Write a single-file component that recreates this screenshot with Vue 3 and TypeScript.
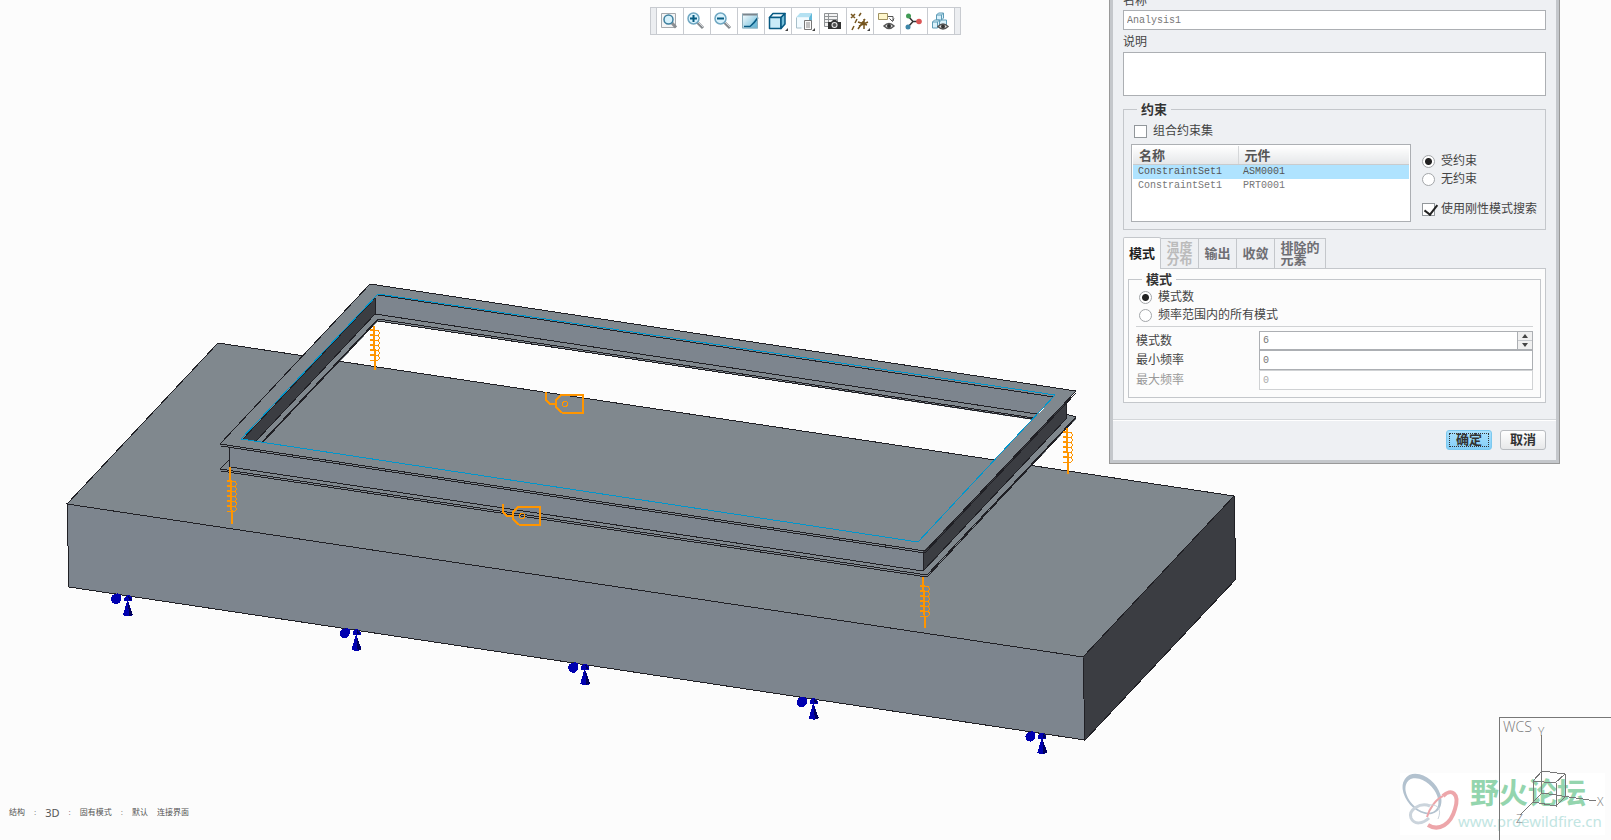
<script setup lang="ts">
import { ref } from 'vue'

interface Point { x: number; y: number }
interface Spring extends Point { length: number; coil: number; lean: number }

const name = ref('Analysis1')
const description = ref('')
const combine = ref(false)
const support = ref('constrained')
const rigid = ref(true)
const modeKind = ref('count')
const modeCount = ref('6')
const minFreq = ref('0')
const maxFreq = ref('0')
const activeTab = ref(0)
const selectedRow = ref(0)

const sets = [
  { name: 'ConstraintSet1', part: 'ASM0001' },
  { name: 'ConstraintSet1', part: 'PRT0001' },
]
const tabs = [
  { label: '模式', disabled: false },
  { label: '温度\n分布', disabled: true },
  { label: '输出', disabled: false },
  { label: '收敛', disabled: false },
  { label: '排除的\n元素', disabled: false },
]
const tools = ['重新调整', '放大', '缩小', '重画', '显示样式', '已保存方向', '视图管理器', '基准显示', '注释显示', '旋转中心', '仿真显示']

const supports: Point[] = [0, 1, 2, 3, 4].map((i) => ({ x: 111 + i * 228.6, y: 593 + i * 34.4 }))
const springs: Spring[] = [
  { x: 374, y: 326, length: 44, coil: 3, lean: 1 },
  { x: 230, y: 467, length: 57, coil: 13, lean: 2 },
  { x: 1067, y: 428, length: 46, coil: 3, lean: 1 },
  { x: 923, y: 577, length: 51, coil: 8, lean: 2 },
]
const masses: Point[] = [{ x: 546, y: 392 }, { x: 503, y: 504 }]
const loops = [0, 1, 2, 3, 4, 5]

function step(delta: number) {
  modeCount.value = String(Math.max(0, Number(modeCount.value) + delta))
}
</script>

<template>
  <main class="workspace">
    <svg class="scene" viewBox="0 0 1611 840" preserveAspectRatio="xMinYMin meet" aria-hidden="true">
      <g class="edge">
        <path class="top" d="M218 343L1234 496L1083 657L67 504Z" />
        <path class="front" d="M67 504L1083 657L1085 740L69 587Z" />
        <path class="side" d="M1083 657L1234 496L1236 579L1085 740Z" />
      </g>
      <g>
        <path class="top" fill-rule="evenodd" d="M370 284L1076 391L1066 403V414L1076 417V419L927 578L220 471L230 459V447L220 445ZM378 321L1033 420L1055 396L918 542L264 443Z" />
        <path class="front" d="M375 295L1054 397L1037 414L375 314Z" />
        <path class="front" d="M230 447L923 552V571L230 467Z" />
        <path class="side" d="M242 440L375 297V314L256 441Z" />
        <path class="side" d="M923 552L1066 402V419L924 571Z" />
      </g>
      <g class="line">
        <path d="M220 444L370 284L1076 391L925 551ZM221 446L925 553L1076 393" />
        <path d="M378 295L1054 397M375 298V314L1037 414M378 319L1034 418M378 321L1032 419" />
        <path d="M242 440L375 298M256 441L375 314M262 442L378 319M263 442L378 320" />
        <path d="M229.500 447V467M230 459L220 469L927 575L1076 417L1066 414M221 471L927 577L1076 418M230 467L923 571L1066 419V402M923 552V571" />
      </g>
      <path class="contour" d="M241 439L378 294L1055 395L918 542Z" />
      <g v-for="(s, i) in springs" :key="'s' + i" class="orange" :transform="`translate(${s.x} ${s.y})`">
        <path class="stem" :d="`M0 0L${s.lean} ${s.length}`" />
        <path v-for="n in loops" :key="n" :d="`M${s.lean} ${s.coil + n * 5}h-5v1h5h2q3 1 2 4q-1 2-4 1h-5`" />
      </g>
      <g v-for="(m, i) in masses" :key="'m' + i" class="orange mass" :transform="`translate(${m.x} ${m.y})`">
        <path d="M0 0V8L4 12H10M17 21L15 20L10 15V8L15 3H37V21H17" />
        <circle cx="19" cy="12" r="2.500" />
      </g>
      <g v-for="(p, i) in supports" :key="'p' + i" class="support" :transform="`translate(${p.x} ${p.y})`">
        <circle cx="5" cy="6" r="5" /><path d="M6 0L10 2V6L6 7ZM13 8V5L16 2H18L21 5V8ZM16 8h1L22 22Q17 25 12 22Z" />
        <path class="shade" d="M17 9L22 22L18 23ZM17 3h1l3 4h-3Z" />
      </g>
    </svg>

    <div class="toolbar" role="toolbar" aria-label="视图">
      <button v-for="(tool, i) in tools" :key="tool" type="button" class="tool" :aria-label="tool">
        <svg viewBox="0 0 24 24" width="24" height="24">
          <defs>
            <linearGradient id="sky" x2="1" y2="1"><stop stop-color="#fff" /><stop offset="1" stop-color="#62b8d8" /></linearGradient>
          </defs>
          <g v-if="i === 0" fill="none">
            <path d="M4.500 4.500h14v14h-14Z" fill="#f5f5f5" stroke="#a5a9ad" />
            <path d="M15 14l4 4.500" stroke="#8b8f93" stroke-width="3" /><circle cx="11.500" cy="10.500" r="4.500" fill="#d6f1fb" stroke="#3d7f9e" stroke-width="1.500" />
          </g>
          <g v-else-if="i === 1 || i === 2" fill="none">
            <path d="M13 13l6 6" stroke="#858a8e" stroke-width="3" /><path d="M14 13l5 5" stroke="#d5d7d9" />
            <circle cx="9.500" cy="9.500" r="5.500" fill="#d9f2fc" stroke="#6fa7c2" stroke-width="1.500" />
            <path d="M6 9.500h7" stroke="#075d83" stroke-width="2" /><path v-if="i === 1" d="M9.500 6v7" stroke="#075d83" stroke-width="2" />
          </g>
          <g v-else-if="i === 3">
            <path d="M4 4.500h16v15H4Z" fill="url(#sky)" /><path d="M4 4.500h16v2H4Z" fill="#7b858c" /><path d="M12 19Q14 12 20 8v11Z" fill="#5badcf" opacity=".5" />
            <path d="M6 17.500h6q4-3 8-9" fill="none" stroke="#075a83" stroke-width="1.500" /><path d="M4.500 5v14h15V5" fill="none" stroke="#8cadbb" />
          </g>
          <g v-else-if="i === 4" fill="#c9ebf8" stroke="#075a83" stroke-width="1.500" stroke-linejoin="round">
            <path d="M4.500 8.500L8 4.500h12l-4 4Z" fill="#f0fbff" /><path d="M4.500 8.500H16v11H4.500Z" /><path d="M16 8.500l4-4V15l-4 4.500Z" fill="#75bed9" />
          </g>
          <g v-else-if="i === 5">
            <path d="M4 8.500L8 4h12l-3 4.500Z" fill="#b4e1f2" /><path d="M4 8.500h13v11H4Z" fill="#f2fbff" /><path d="M17 8.500L20 4v12l-3 3Z" fill="#62b9da" /><path d="M4.500 8.500V19h5" fill="none" stroke="#a7bfca" />
            <path d="M12.500 11.500h7v9h-7Z" fill="#fafafa" stroke="#777" /><path d="M14 14h4M14 16h4M14 18h4" stroke="#888" />
          </g>
          <g v-else-if="i === 6">
            <path d="M4.500 4.500h13v13h-13ZM4 7.500h14M4 10.500h14M4 13.500h14M8.500 4v14" fill="#f3f3f3" stroke="#909395" />
            <path d="M8 13h3l2-2h3l2 2h3v7H8Z" fill="#333" /><circle cx="14.500" cy="16" r="3" fill="#eee" /><circle cx="14.500" cy="16" r="2" fill="#555" />
          </g>
          <g v-else-if="i === 7" fill="none" stroke="#75551f" stroke-width="1.500">
            <path d="M4 5l4 4m0-4l-4 4M14 4l-2 3M10 10l-2 4M7 17l-2 4M18 10l-7 10M11 13l9 3M17 10v10M12 17l9-4" />
          </g>
          <g v-else-if="i === 8">
            <path d="M4.500 4.500h9v6h-9Z" fill="#fff7cc" stroke="#a09261" /><path d="M14 7.500h5V12M15.500 9.500l3 3 1.500-3" fill="none" stroke="#555" />
            <path d="M10 17q5-5 10 0q-5 5-10 0Z" fill="#ddd" stroke="#555" stroke-width="1.500" /><circle cx="15" cy="17" r="2" fill="#333" />
          </g>
          <g v-else-if="i === 9">
            <path d="M7 7l5 5.500h6M12 12.500L7 18" fill="none" stroke="#333" stroke-width="1.500" />
            <circle cx="7.500" cy="7" r="2.500" fill="#419b55" /><circle cx="18" cy="12.500" r="2.800" fill="#dc5555" /><circle cx="7" cy="18" r="2.500" fill="#3d86a8" />
          </g>
          <g v-else>
            <g fill="#d9f1fb" stroke="#5c9bb6"><path d="M8.500 6l2-2h5v5l-2 2h-5ZM8.500 6h5v5M13.500 6l2-2" /><path d="M4.500 13l2-2h5v6l-2 2h-5ZM4.500 13h5v6M9.500 13l2-2M11.500 13l2-2h5v6h-7Z" /></g>
            <path d="M10 17.500q5-5 10 0q-5 5-10 0Z" fill="#ddd" stroke="#555" stroke-width="1.500" /><circle cx="15" cy="17.500" r="2" fill="#333" />
          </g>
          <path v-if="i === 4 || i === 5 || i === 7" d="M23 19v3h-3Z" fill="#444" />
        </svg>
      </button>
    </div>

    <form class="dialog" @submit.prevent>
      <div class="content">
        <label for="name" class="caption">名称</label>
        <input id="name" v-model="name" class="field" type="text">
        <label for="description" class="caption second">说明</label>
        <textarea id="description" v-model="description" class="field area"></textarea>

        <fieldset class="group">
          <legend>约束</legend>
          <label class="choice"><input v-model="combine" type="checkbox"><span>组合约束集</span></label>
          <div class="columns">
            <div class="list">
              <table>
                <thead><tr><th>名称</th><th>元件</th></tr></thead>
                <tbody>
                  <tr v-for="(row, i) in sets" :key="i" :class="{ selected: selectedRow === i }" @click="selectedRow = i">
                    <td>{{ row.name }}</td><td>{{ row.part }}</td>
                  </tr>
                </tbody>
              </table>
            </div>
            <div class="options">
              <label class="choice"><input v-model="support" type="radio" name="support" value="constrained"><span>受约束</span></label>
              <label class="choice"><input v-model="support" type="radio" name="support" value="free"><span>无约束</span></label>
              <label class="choice rigid"><input v-model="rigid" type="checkbox"><span>使用刚性模式搜索</span></label>
            </div>
          </div>
        </fieldset>

        <div class="tabs" role="tablist">
          <button v-for="(tab, i) in tabs" :key="tab.label" type="button" role="tab" class="tab" :class="{ active: activeTab === i }" :aria-selected="activeTab === i" :disabled="tab.disabled" @click="activeTab = i"><span>{{ tab.label }}</span></button>
        </div>
        <div class="panel" role="tabpanel">
          <fieldset class="modes">
            <legend>模式</legend>
            <label class="choice"><input v-model="modeKind" type="radio" name="mode" value="count"><span>模式数</span></label>
            <label class="choice"><input v-model="modeKind" type="radio" name="mode" value="range"><span>频率范围内的所有模式</span></label>
            <div class="values">
              <label for="count">模式数</label>
              <div class="spinner">
                <input id="count" v-model="modeCount" type="text" inputmode="numeric">
                <div class="steps">
                  <button type="button" aria-label="增加" @click="step(1)"><svg viewBox="0 0 14 8"><path d="M7 2L10 6H4Z" /></svg></button>
                  <button type="button" aria-label="减少" @click="step(-1)"><svg viewBox="0 0 14 8"><path d="M7 6L10 2H4Z" /></svg></button>
                </div>
              </div>
              <label for="min">最小频率</label>
              <input id="min" v-model="minFreq" class="field" type="text">
              <label for="max" class="dim">最大频率</label>
              <input id="max" v-model="maxFreq" class="field" type="text" disabled>
            </div>
          </fieldset>
        </div>
      </div>
      <footer class="footer">
        <button type="submit" class="action primary"><span>确定</span></button>
        <button type="button" class="action"><span>取消</span></button>
      </footer>
    </form>

    <div class="status"><span>结构</span><span>:</span><span class="large">3D</span><span>:</span><span>固有模式</span><span>:</span><span>默认</span><span>连接界面</span></div>

    <svg class="corner" viewBox="0 0 211 124" width="211" height="124" role="img" aria-label="坐标系">
      <path d="M0 57H205V119H0Z" fill="#fff" />
      <g fill="none">
        <g transform="rotate(48 22 78)"><path fill-rule="evenodd" fill="#b3c2cf" d="M-1 78a23 16 0 1 0 46 0a23 16 0 1 0-46 0ZM3 79a20 13 0 1 1 40 0a20 13 0 1 1-40 0Z" /></g>
        <path d="M43 80C51 72 60 77 55 93C51 108 39 116 28 109" stroke="#eda6aa" stroke-width="4" />
        <path d="M43 80C36 83 29 93 27 101" stroke="#eda6aa" stroke-width="2" />
        <path d="M30 90C20 86 8 94 11 102C14 109 23 108 29 102" stroke="#cbd4dc" stroke-width="3" /><path d="M30 89C38 88 42 94 38 103" stroke="#cbd4dc" />
      </g>
      <text x="70" y="88" class="brand">野火论坛</text>
      <text x="58" y="111" class="site">www.proewildfire.cn</text>
      <g fill="none" stroke="#777" shape-rendering="crispEdges">
        <path d="M99.500 130V1.500H220" /><path d="M141.500 19V55L142 77L120 99M142 77L196 85" />
        <path d="M142 55L165 58L155 67L133 65ZM133 65V86L156 90V67M165 58V81L156 90M133 86L142 77" />
      </g>
      <g class="axis"><text x="103" y="16" class="wcs">WCS</text><text x="138" y="20">Y</text><text x="197" y="90">X</text><text x="116" y="107">Z</text></g>
    </svg>
  </main>
</template>

<style>
html, body { background: #fcfcfc; }
</style>

<style scoped>
* { box-sizing: border-box; }
.workspace {
  position: relative;
  min-height: 100vh;
  overflow: hidden;
  background: #fcfcfc;
  color: #444;
  font: 12px/14px "Liberation Sans", "Noto Sans CJK SC", sans-serif;
}
button, input, textarea { font: inherit; color: inherit; margin: 0; }
.scene { position: absolute; inset: 0; width: 100%; height: 100%; shape-rendering: crispEdges; }
.edge, .line { stroke: #202025; stroke-width: 1; }
.line, .contour, .orange { fill: none; }
.top { fill: #80888e; }
.front { fill: #7d858e; }
.side { fill: #3b3d42; }
.contour { stroke: #0096cc; }
.orange { stroke: #ff9500; stroke-width: 1; }
.stem, .mass { stroke-width: 2; }
.mass circle { stroke-width: 1; }
.support { fill: #0000b0; }
.shade { fill: #00005c; }

.toolbar {
  position: absolute;
  top: 7px;
  left: 0;
  right: 0;
  display: flex;
  width: 311px;
  height: 28px;
  margin: 0 auto;
  padding: 0 5px;
  border: 1px solid #c8cbd0;
  background: #eceef1;
}
.tool { flex: 1; min-width: 0; display: flex; align-items: center; padding: 0; border: 0; border-left: 1px solid #c8cbd0; background: #fff; }
.tool:last-child { border-right: 1px solid #c8cbd0; }
.tool svg { flex: none; }

.dialog {
  position: absolute;
  top: -8px;
  right: 51px;
  width: 451px;
  border: solid #c4c7cb;
  border-width: 0 4px 4px;
  outline: 1px solid #999;
  outline-offset: -1px;
  background: #eef0f3;
}
.content { padding: 2px 10px 0; }
.caption { display: block; margin-bottom: 2px; }
.second { margin: 5px 0 3px; }
.field, .spinner {
  display: block;
  width: 100%;
  height: 20px;
  padding: 0 3px;
  border: 1px solid #acafb3;
  border-radius: 0;
  background: #fff;
  color: #777;
  font: 10px/14px "Liberation Mono", monospace;
  outline: 0;
}
.area { height: 44px; resize: none; }
fieldset { min-width: 0; margin: 0; border: 1px solid #c4c7cb; }
legend { height: 15px; margin-left: 6px; padding: 0 4px; font-size: 13px; line-height: 15px; font-weight: 700; color: #333; }
.group { margin-top: 6px; padding: 7px 8px 7px 7px; }
.group > .choice { margin-left: 3px; height: 14px; }
.choice { display: flex; align-items: center; height: 18px; gap: 6px; }
.choice input { appearance: none; flex: none; width: 13px; height: 13px; border: 1px solid #92979b; background: #fff; }
.choice input[type="radio"] { border-color: #a3a6a9; border-radius: 50%; }
.choice input[type="radio"]:checked { background: radial-gradient(circle, #222 0 3px, #fff 4px); }
.choice input[type="checkbox"]:checked { position: relative; }
.choice input[type="checkbox"]:checked::after { content: ""; position: absolute; left: 4px; top: -2px; width: 6px; height: 11px; border: solid #222; border-width: 0 2px 2px 0; transform: rotate(38deg); }
.columns { display: flex; gap: 11px; margin-top: 6px; }
.list { flex: 1; height: 78px; padding: 1px; border: 1px solid #acafb3; background: #fff; }
table { width: 100%; border-collapse: collapse; table-layout: fixed; }
th { height: 18px; padding: 3px 6px 0; text-align: left; font-size: 13px; line-height: 14px; color: #555; background: linear-gradient(#fff, #e5e7e9); border-bottom: 1px solid #c9cbcd; }
th:first-child { width: 105px; border-right: 1px solid #d5d7d9; }
td { height: 14px; padding: 0 5px; color: #777; font: 10px/14px "Liberation Mono", monospace; }
.selected { background: #afe3ff; }
.selected td { color: #555; }
.options { flex: none; width: 115px; padding-top: 8px; white-space: nowrap; }
.rigid { margin-top: 12px; }

.tabs { display: flex; align-items: flex-end; height: 32px; margin-top: 7px; }
.tab { width: 38px; height: 31px; padding: 0; border: 1px solid #c4c7cb; border-left: 0; background: #eef0f3; color: #6e6e73; font-size: 13px; line-height: 12px; font-weight: 700; white-space: pre; }
.tab span { display: inline-block; text-align: left; }
.tab:last-child { width: 51px; }
.tab:disabled { color: #bbb; }
.tab.active { position: relative; z-index: 1; height: 32px; border-left: 1px solid #c4c7cb; border-bottom: 0; border-radius: 2px 2px 0 0; background: #fcfcfc; color: #222; }
.panel { margin-top: -1px; padding: 3px 4px 4px; border: 1px solid #c4c7cb; background: #fcfcfc; }
.modes { padding: 1px 7px 7px; }
.modes > .choice { margin-left: 3px; }
.values { display: grid; grid-template-columns: 123px 1fr; align-items: center; margin-top: 2px; padding-top: 4px; border-top: 1px solid #d0d2d4; }
.values .dim { color: #999; }
.field:disabled { border-color: #d0d2d4; color: #aaa; }
.spinner { display: flex; height: 19px; padding: 0 0 0 3px; }
.spinner input { flex: 1; min-width: 0; padding: 0; border: 0; outline: 0; background: none; }
.steps { display: flex; flex-direction: column; width: 15px; border-left: 1px solid #acafb3; }
.steps button { flex: 1; min-height: 0; padding: 0; border: 0; background: #f0f0f0; line-height: 0; }
.steps button + button { border-top: 1px solid #c4c7cb; }
.steps svg { display: block; width: 14px; height: 8px; fill: #444; }
.footer { display: flex; justify-content: flex-end; gap: 8px; margin-top: 16px; padding: 10px; border-top: 1px solid #d3d6d9; box-shadow: inset 0 1px #fff; }
.action { width: 46px; height: 20px; padding: 2px; border: 1px solid #b9bcc0; border-radius: 3px; background: linear-gradient(#fff, #e7e8e9); color: #333; font-size: 13px; line-height: 14px; font-weight: 700; }
.action span { display: block; height: 14px; }
.primary { border-color: #7cc9ef; background: linear-gradient(#a9e0fd, #83cff8); }
.primary span { outline: 1px dotted #333; outline-offset: -1px; }

.status { position: absolute; left: 9px; bottom: 19px; display: flex; align-items: center; gap: 9px; color: #555; font-size: 8px; line-height: 16px; }
.large { font-size: 11px; font-family: "Noto Sans", sans-serif; }
.corner { position: absolute; right: 0; bottom: 0; overflow: hidden; }
.brand { fill: #94d5ae; font: 700 29px "Noto Sans CJK SC", sans-serif; }
.site { fill: #c2e5e2; font: 15px "Noto Sans", sans-serif; }
.axis { fill: #777; font: 300 12px "Open Sans", sans-serif; }
.wcs { font-size: 14px; }
</style>
